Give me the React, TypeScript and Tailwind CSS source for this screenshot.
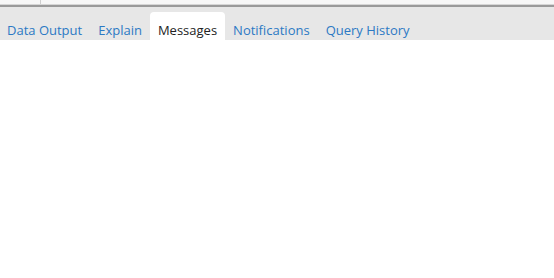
const tabs = ["Data Output", "Explain", "Messages", "Notifications", "Query History"];

export default function App() {
  return (
    <div className="w-[554px] h-[278px] bg-white flex flex-col" style={{ fontFamily: '"Open Sans", sans-serif' }}>
      <div className="h-[5px] flex bg-[#f7f7f7] border-b border-[#d6d6d6]">
        <div className="w-[41px] border-r border-[#cfcfcf]" />
      </div>
      <div className="h-[2px] bg-[#9a9a9a]" />
      <ul className="h-[33px] bg-[#e7e7e7] flex items-end -ml-[1px]">
        {tabs.map((t) => (
          <li
            key={t}
            className={
              t === "Messages"
                ? "h-[28px] px-2 pt-[9px] leading-[19px] bg-white rounded-t-[4px] text-[13px] text-[#222]"
                : "h-[28px] px-2 pt-[9px] leading-[19px] text-[13px] text-[#2c79c4]"
            }
          >
            {t}
          </li>
        ))}
      </ul>
      <div className="flex-1 bg-white" />
    </div>
  );
}
